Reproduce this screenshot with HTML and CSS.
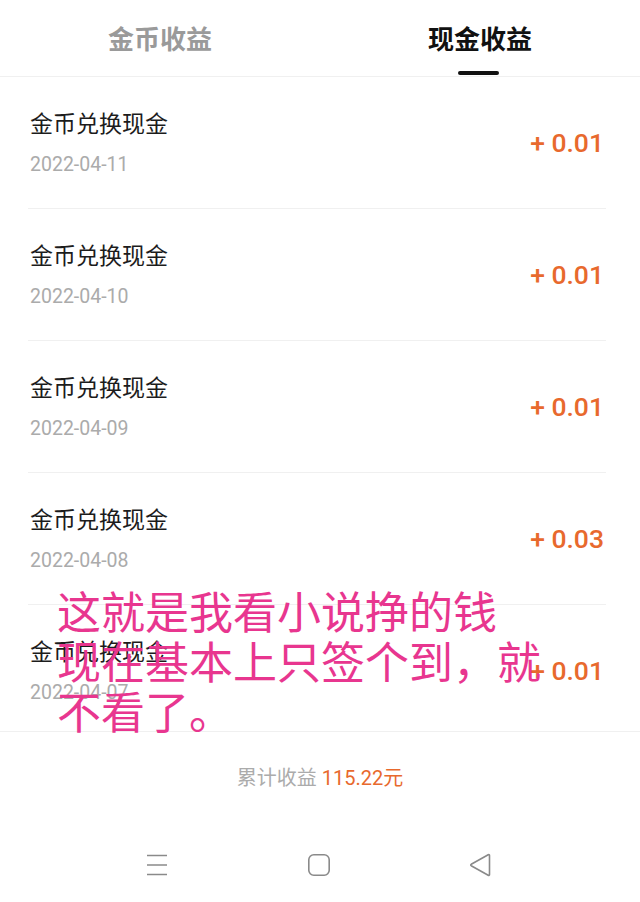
FILE: index.html
```html
<!DOCTYPE html>
<html lang="zh-CN">
<head>
<meta charset="utf-8">
<title>现金收益</title>
<link rel="stylesheet" href="styles.css">
</head>
<body>
<div class="screen">
  <div class="tabs">
    <div class="tab">金币收益</div>
    <div class="tab active">现金收益</div>
  </div>
  <div class="list">
    <div class="row">
      <div class="info"><div class="title">金币兑换现金</div><div class="date">2022-04-11</div></div>
      <div class="amount">+ 0.01</div>
    </div>
    <div class="row">
      <div class="info"><div class="title">金币兑换现金</div><div class="date">2022-04-10</div></div>
      <div class="amount">+ 0.01</div>
    </div>
    <div class="row">
      <div class="info"><div class="title">金币兑换现金</div><div class="date">2022-04-09</div></div>
      <div class="amount">+ 0.01</div>
    </div>
    <div class="row">
      <div class="info"><div class="title">金币兑换现金</div><div class="date">2022-04-08</div></div>
      <div class="amount">+ 0.03</div>
    </div>
    <div class="row">
      <div class="info"><div class="title">金币兑换现金</div><div class="date">2022-04-07</div></div>
      <div class="amount">+ 0.01</div>
    </div>
  </div>
  <div class="total">累计收益 <span class="total-num">115.22元</span></div>
  <div class="navbar">
    <svg class="nav-icon" viewBox="0 0 24 24" width="24" height="24"><path d="M2 2.5h20M2 12h20M2 21.5h20" stroke="#8a8a8a" stroke-width="1.6" fill="none"/></svg>
    <svg class="nav-icon" viewBox="0 0 24 24" width="24" height="24"><rect x="1.8" y="1.8" width="20.4" height="20.4" rx="5" stroke="#8a8a8a" stroke-width="1.6" fill="none"/></svg>
    <svg class="nav-icon" viewBox="0 0 24 24" width="24" height="24"><path d="M21.5 2.5v19c0 0.8-0.6 1.1-1.3 0.7L3.2 12.7c-0.6-0.4-0.6-1 0-1.4L20.2 1.8c0.7-0.4 1.3-0.1 1.3 0.7z" stroke="#8a8a8a" stroke-width="1.6" fill="none" stroke-linejoin="round"/></svg>
  </div>
  <div class="overlay">这就是我看小说挣的钱<br>现在基本上只签个到，就<br>不看了。</div>
</div>
</body>
</html>
```
FILE: styles.css
```css
* { box-sizing: border-box; margin: 0; padding: 0; }
html, body { background: #fff; }
body {
  font-family: Roboto, "Noto Sans CJK SC", sans-serif;
  width: 640px;
  height: 902px;
  overflow: hidden;
}
.screen {
  position: relative;
  height: 902px;
  display: flex;
  flex-direction: column;
}
.tabs {
  height: 77px;
  display: flex;
  border-bottom: 1px solid #f0f0f0;
}
.tab {
  flex: 1;
  display: flex;
  justify-content: center;
  padding-top: 19px;
  font-family: "Noto Sans CJK SC", sans-serif;
  font-size: 26px;
  line-height: 38px;
  font-weight: 700;
  color: #9a9a9a;
  position: relative;
}
.tab.active { color: #111; }
.tab.active::after {
  content: "";
  position: absolute;
  left: 50%;
  margin-left: -22px;
  top: 71px;
  width: 41px;
  height: 4px;
  border-radius: 2px;
  background: #111;
}
.list {
  flex: 1;
  overflow: hidden;
  padding: 0 34px 0 28px;
}
.row {
  height: 132px;
  display: flex;
  align-items: center;
  justify-content: space-between;
  border-bottom: 1px solid #f0f0f0;
  padding: 0 3px 0 2px;
}
.info {
  display: flex;
  flex-direction: column;
  gap: 15px;
  margin-top: 0;
}
.title {
  font-family: "Noto Sans CJK SC", sans-serif;
  font-size: 23px;
  line-height: 30px;
  color: #1c1c1c;
}
.date {
  font-family: Roboto, sans-serif;
  font-size: 19.5px;
  line-height: 26px;
  color: #ababab;
}
.amount {
  font-family: Roboto, sans-serif;
  font-size: 26.5px;
  font-weight: 500;
  color: #e8692d;
  margin-top: 0;
  margin-right: -1px;
}
.total {
  height: 90px;
  border-top: 1px solid #f0f0f0;
  display: flex;
  justify-content: center;
  align-items: center;
  gap: 5px;
  font-family: "Noto Sans CJK SC", sans-serif;
  font-size: 20px;
  color: #ababab;
}
.total-num {
  font-family: Roboto, "Noto Sans CJK SC", sans-serif;
  color: #e8692d;
}
.navbar {
  height: 81px;
  display: flex;
  justify-content: space-between;
  align-items: flex-start;
  padding: 32px 148px 0 145px;
}
.nav-icon { width: 24px; height: 24px; display: block; }
.overlay {
  position: absolute;
  left: 57px;
  top: 585px;
  font-family: "Noto Sans CJK SC", sans-serif;
  font-size: 44px;
  line-height: 50px;
  color: #e8368f;
  white-space: nowrap;
}
```
